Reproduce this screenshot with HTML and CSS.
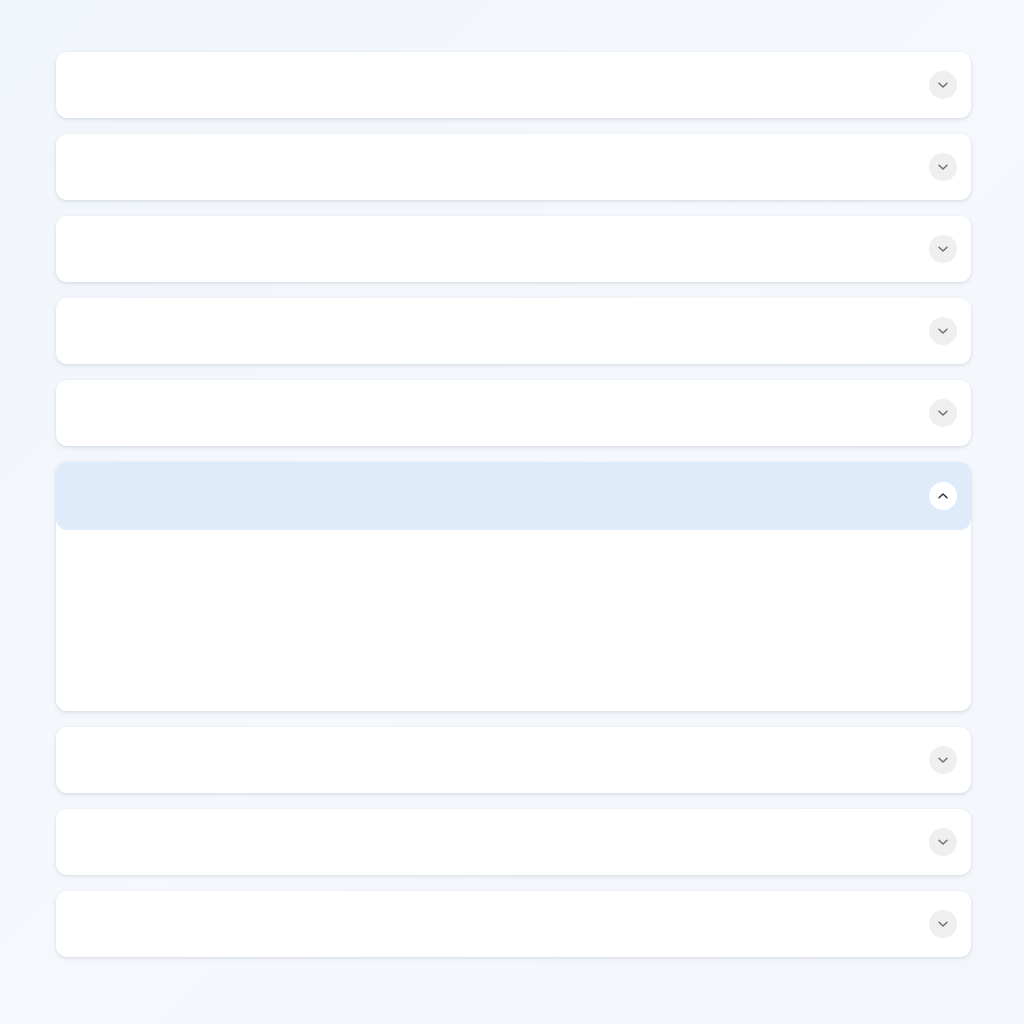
FILE: index.html
```html
<!DOCTYPE html>
<html>
<head>
<meta charset="utf-8">
<link rel="stylesheet" href="styles.css">
</head>
<body>
<div class="accordion">
  <div class="item"><div class="header"><span class="toggle"><svg viewBox="0 0 14 14" width="14" height="14"><path d="M3 5.2 7 9l4-3.8" fill="none" stroke="currentColor" stroke-width="1.5" stroke-linecap="round" stroke-linejoin="round"/></svg></span></div></div>
  <div class="item"><div class="header"><span class="toggle"><svg viewBox="0 0 14 14" width="14" height="14"><path d="M3 5.2 7 9l4-3.8" fill="none" stroke="currentColor" stroke-width="1.5" stroke-linecap="round" stroke-linejoin="round"/></svg></span></div></div>
  <div class="item"><div class="header"><span class="toggle"><svg viewBox="0 0 14 14" width="14" height="14"><path d="M3 5.2 7 9l4-3.8" fill="none" stroke="currentColor" stroke-width="1.5" stroke-linecap="round" stroke-linejoin="round"/></svg></span></div></div>
  <div class="item"><div class="header"><span class="toggle"><svg viewBox="0 0 14 14" width="14" height="14"><path d="M3 5.2 7 9l4-3.8" fill="none" stroke="currentColor" stroke-width="1.5" stroke-linecap="round" stroke-linejoin="round"/></svg></span></div></div>
  <div class="item"><div class="header"><span class="toggle"><svg viewBox="0 0 14 14" width="14" height="14"><path d="M3 5.2 7 9l4-3.8" fill="none" stroke="currentColor" stroke-width="1.5" stroke-linecap="round" stroke-linejoin="round"/></svg></span></div></div>
  <div class="item open"><div class="header"><span class="toggle"><svg viewBox="0 0 14 14" width="14" height="14"><path d="M3 8.8 7 5l4 3.8" fill="none" stroke="currentColor" stroke-width="1.5" stroke-linecap="round" stroke-linejoin="round"/></svg></span></div><div class="body"></div></div>
  <div class="item"><div class="header"><span class="toggle"><svg viewBox="0 0 14 14" width="14" height="14"><path d="M3 5.2 7 9l4-3.8" fill="none" stroke="currentColor" stroke-width="1.5" stroke-linecap="round" stroke-linejoin="round"/></svg></span></div></div>
  <div class="item"><div class="header"><span class="toggle"><svg viewBox="0 0 14 14" width="14" height="14"><path d="M3 5.2 7 9l4-3.8" fill="none" stroke="currentColor" stroke-width="1.5" stroke-linecap="round" stroke-linejoin="round"/></svg></span></div></div>
  <div class="item"><div class="header"><span class="toggle"><svg viewBox="0 0 14 14" width="14" height="14"><path d="M3 5.2 7 9l4-3.8" fill="none" stroke="currentColor" stroke-width="1.5" stroke-linecap="round" stroke-linejoin="round"/></svg></span></div></div>
</div>
</body>
</html>
```
FILE: styles.css
```css
html, body {
  margin: 0;
  padding: 0;
}
body {
  width: 1024px;
  height: 1024px;
  background: linear-gradient(135deg, #f1f6fc 0%, #f5f8fc 50%, #f3f7fb 100%);
  font-family: "Inter", "Liberation Sans", sans-serif;
  overflow: hidden;
}
.accordion {
  display: flex;
  flex-direction: column;
  gap: 16px;
  padding: 52px 53px 0 56px;
}
.item {
  background: #ffffff;
  border-radius: 11px;
  box-shadow: 0 1px 3px rgba(30, 50, 80, 0.10), 0 2px 6px rgba(30, 50, 80, 0.05);
  overflow: hidden;
}
.header {
  height: 66px;
  display: flex;
  align-items: center;
  justify-content: flex-end;
  padding-right: 14px;
}
.toggle {
  width: 28px;
  height: 28px;
  border-radius: 50%;
  background: #efefef;
  color: #707070;
  display: flex;
  align-items: center;
  justify-content: center;
}
.open .header {
  height: 68px;
  background: #deebfb;
  border-radius: 11px;
}
.open .toggle {
  background: #ffffff;
  color: #2a2f38;
}
.body {
  height: 181px;
}
```
